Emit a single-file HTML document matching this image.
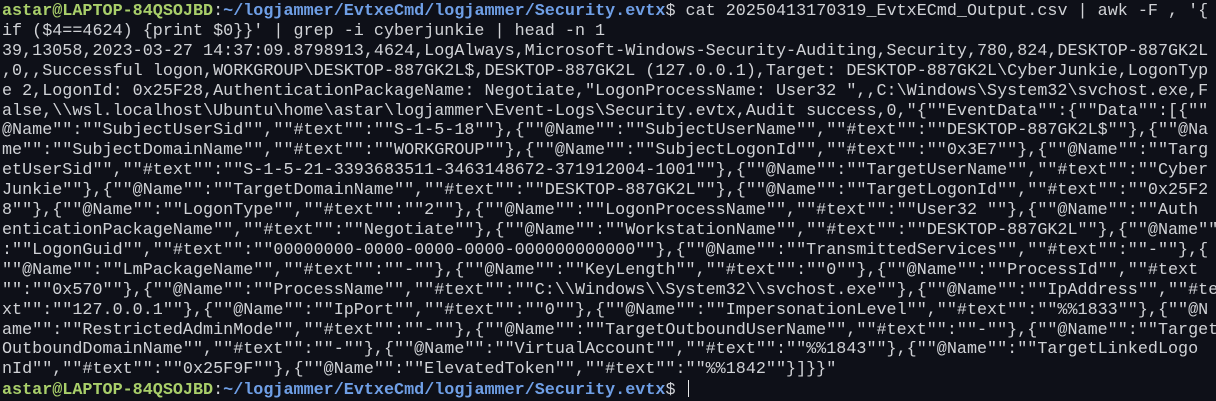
<!DOCTYPE html>
<html><head><meta charset="utf-8"><style>
html,body{margin:0;padding:0;background:#0e1018;width:1216px;height:401px;overflow:hidden}
.t{font-family:"Liberation Mono","DejaVu Sans Mono",monospace;font-size:16.75px;line-height:19.9px;color:#d0d2d6;white-space:pre;padding:2px 0 0 2px;margin-top:0}
.g{color:#a9cf6a;font-weight:bold}.b{color:#6f9fe6;font-weight:bold}
.c{display:inline-block;width:1.5px;height:17px;background:#e8e8e8;vertical-align:-3px;margin-left:2px}
</style></head><body><div class="t"><span class="g">astar@LAPTOP-84QSOJBD</span>:<span class="b">~/logjammer/EvtxeCmd/logjammer/Security.evtx</span>$ cat 20250413170319_EvtxECmd_Output.csv | awk -F , '{
if ($4==4624) {print $0}}' | grep -i cyberjunkie | head -n 1
39,13058,2023-03-27 14:37:09.8798913,4624,LogAlways,Microsoft-Windows-Security-Auditing,Security,780,824,DESKTOP-887GK2L
,0,,Successful logon,WORKGROUP\DESKTOP-887GK2L$,DESKTOP-887GK2L (127.0.0.1),Target: DESKTOP-887GK2L\CyberJunkie,LogonTyp
e 2,LogonId: 0x25F28,AuthenticationPackageName: Negotiate,"LogonProcessName: User32 ",,C:\Windows\System32\svchost.exe,F
alse,\\wsl.localhost\Ubuntu\home\astar\logjammer\Event-Logs\Security.evtx,Audit success,0,"{""EventData"":{""Data"":[{""
@Name"":""SubjectUserSid"",""#text"":""S-1-5-18""},{""@Name"":""SubjectUserName"",""#text"":""DESKTOP-887GK2L$""},{""@Na
me"":""SubjectDomainName"",""#text"":""WORKGROUP""},{""@Name"":""SubjectLogonId"",""#text"":""0x3E7""},{""@Name"":""Targ
etUserSid"",""#text"":""S-1-5-21-3393683511-3463148672-371912004-1001""},{""@Name"":""TargetUserName"",""#text"":""Cyber
Junkie""},{""@Name"":""TargetDomainName"",""#text"":""DESKTOP-887GK2L""},{""@Name"":""TargetLogonId"",""#text"":""0x25F2
8""},{""@Name"":""LogonType"",""#text"":""2""},{""@Name"":""LogonProcessName"",""#text"":""User32 ""},{""@Name"":""Auth
enticationPackageName"",""#text"":""Negotiate""},{""@Name"":""WorkstationName"",""#text"":""DESKTOP-887GK2L""},{""@Name""
:""LogonGuid"",""#text"":""00000000-0000-0000-0000-000000000000""},{""@Name"":""TransmittedServices"",""#text"":""-""},{
""@Name"":""LmPackageName"",""#text"":""-""},{""@Name"":""KeyLength"",""#text"":""0""},{""@Name"":""ProcessId"",""#text
"":""0x570""},{""@Name"":""ProcessName"",""#text"":""C:\\Windows\\System32\\svchost.exe""},{""@Name"":""IpAddress"",""#te
xt"":""127.0.0.1""},{""@Name"":""IpPort"",""#text"":""0""},{""@Name"":""ImpersonationLevel"",""#text"":""%%1833""},{""@N
ame"":""RestrictedAdminMode"",""#text"":""-""},{""@Name"":""TargetOutboundUserName"",""#text"":""-""},{""@Name"":""Target
OutboundDomainName"",""#text"":""-""},{""@Name"":""VirtualAccount"",""#text"":""%%1843""},{""@Name"":""TargetLinkedLogo
nId"",""#text"":""0x25F9F""},{""@Name"":""ElevatedToken"",""#text"":""%%1842""}]}}"
<span class="g">astar@LAPTOP-84QSOJBD</span>:<span class="b">~/logjammer/EvtxeCmd/logjammer/Security.evtx</span>$ <span class="c"></span></div></body></html>
